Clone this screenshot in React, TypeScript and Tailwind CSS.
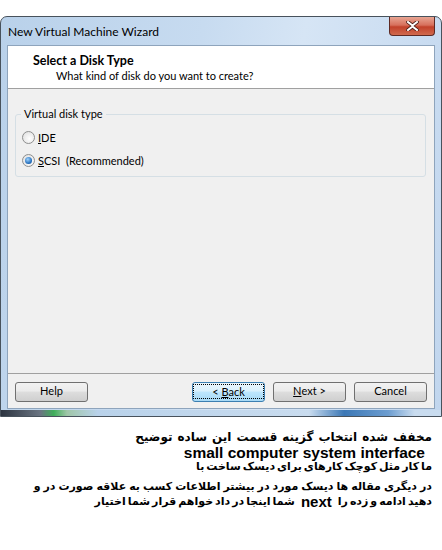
import React from 'react';

const ui = { fontFamily: 'Lato, "Noto Sans", sans-serif' };
const fa = { fontFamily: '"DejaVu Sans", sans-serif' };
const latin = { fontFamily: '"Liberation Sans", Arial, sans-serif' };

function Radio({ checked }: { checked?: boolean }) {
  return (
    <span className="relative inline-flex h-[13px] w-[13px] items-center justify-center rounded-full border border-[#8e8f8f] bg-[radial-gradient(circle_at_60%_60%,#ffffff,#dcdcdc)]">
      {checked && (
        <span className="h-[7px] w-[7px] rounded-full bg-[radial-gradient(circle_at_40%_35%,#9fd4ff,#1a65b5_70%,#0d3f7a)]" />
      )}
    </span>
  );
}

function WinButton({ children, focused }: { children: React.ReactNode; focused?: boolean }) {
  return (
    <button
      className={`flex h-[20px] w-[73px] items-center justify-center rounded-[3px] border text-[11px] text-black ${
        focused
          ? 'border-[#3c7fb1] bg-[linear-gradient(#eaf6fd_0%,#d9f0fc_45%,#bee6fd_50%,#a7d9f5_100%)]'
          : 'border-[#707070] bg-[linear-gradient(#f2f2f2_0%,#ebebeb_45%,#dddddd_50%,#cfcfcf_100%)]'
      }`}
    >
      {focused ? (
        <span className="border border-dotted border-black px-[18px] leading-[13px]">{children}</span>
      ) : (
        children
      )}
    </button>
  );
}

function Words({ words, className }: { words: string[]; className: string }) {
  return (
    <div className={`flex justify-end whitespace-nowrap ${className}`} style={fa}>
      {words.map((w, i) => (
        <span key={i}>{w}</span>
      ))}
    </div>
  );
}

export default function App() {
  return (
    <div className="h-[550px] w-[442px] bg-white" style={ui}>
      <div className="h-[16px]" />
      {/* Window frame */}
      <div className="flex h-[401px] w-[442px] flex-col rounded-t-[7px] border border-[#48525c] bg-[linear-gradient(100deg,#b9d1ea_0%,#c7dbf0_40%,#d6e5f5_60%,#c1d6ee_100%)]">
        {/* Title bar */}
        <div className="relative flex h-[28px] items-center pl-[7px] pt-[2px]">
          <span className="text-[12px] text-black">New Virtual Machine Wizard</span>
          <div className="absolute right-[6px] top-0 flex h-[19px] w-[46px] items-center justify-center rounded-b-[4px] border border-t-0 border-[#5e2a24] bg-[linear-gradient(#e8a593_0%,#d7705c_45%,#c2412a_55%,#d06a4e_100%)]">
            <svg width="13" height="10" viewBox="0 0 13 10">
              <path
                d="M2 1 L6.5 4.5 L11 1 M2 9 L6.5 5.5 L11 9"
                stroke="#4a1c16"
                strokeWidth="3.6"
                fill="none"
                strokeLinecap="square"
              />
              <path
                d="M2 1 L6.5 4.5 L11 1 M2 9 L6.5 5.5 L11 9"
                stroke="#ffffff"
                strokeWidth="2"
                fill="none"
                strokeLinecap="square"
              />
            </svg>
          </div>
        </div>

        {/* Client area */}
        <div className="mx-[6px] flex h-[364px] flex-col border border-[#8ea4bc] bg-[#f0f0f0]">
          <div className="flex h-[43px] flex-col border-b border-[#a0a0a0] bg-white pl-[25px] pt-[7px] leading-[15px] text-black">
            <span className="text-[12.5px] font-bold">Select a Disk Type</span>
            <span className="pl-[23px] text-[11px]">What kind of disk do you want to create?</span>
          </div>

          <div className="flex-1 px-[7px] pr-[8px] pt-[25px]">
            <div className="relative h-[63px] rounded-[3px] border border-[#d5dfe5]">
              <span className="absolute -top-[9px] left-[5px] bg-[#f0f0f0] px-[3px] text-[11px] leading-[15px] text-black">
                Virtual disk type
              </span>
              <div className="flex flex-col gap-[10px] pl-[6px] pt-[16px] text-[11px] leading-[13px] text-black">
                <label className="flex items-center gap-[3px]">
                  <Radio />
                  <span>
                    <span className="underline">I</span>DE
                  </span>
                </label>
                <label className="flex items-center gap-[3px]">
                  <Radio checked />
                  <span className="whitespace-pre">
                    <span className="underline">S</span>CSI  (Recommended)
                  </span>
                </label>
              </div>
            </div>
          </div>

          <div className="flex h-[35px] items-center border-t border-[#a0a0a0] px-[7px] pt-[1px]">
            <WinButton>Help</WinButton>
            <div className="flex-1" />
            <div className="flex gap-[8px]">
              <WinButton focused>
                &lt; <span className="underline">B</span>ack
              </WinButton>
              <WinButton>
                <span className="underline">N</span>ext &gt;
              </WinButton>
              <WinButton>Cancel</WinButton>
            </div>
          </div>
        </div>

        {/* Bottom frame */}
        <div className="mt-auto h-[6px] bg-[linear-gradient(to_right,#2c3440_0%,#6b7582_9%,#3fae5a_12%,#9fc6a8_15%,#b9d2ea_22%,#c9dcef_70%,#3c78b6_78%,#6c9dd0_88%,#c9dcef_94%)]" />
      </div>

      {/* Persian note */}
      <div className="mt-[13px] pr-[10px] font-bold text-black">
        <Words
          className="h-[15px] gap-[5px] text-[12px] leading-[15px]"
          words={['توضیح', 'ساده', 'این', 'قسمت', 'گزینه', 'انتخاب', 'شده', 'مخفف']}
        />
        <div className="h-[15px] pr-[7px] text-right text-[15.5px] leading-[15px]" style={latin}>
          small computer system interface
        </div>
        <Words
          className="h-[13px] gap-[2px] text-[11px] leading-[13px]"
          words={['با', 'ساخت', 'دیسک', 'برای', 'کارهای', 'کوچک', 'مثل', 'کار', 'ما']}
        />
        <Words
          className="mt-[7px] h-[14px] gap-[3px] text-[11px] leading-[14px]"
          words={['و', 'در', 'صورت', 'علاقه', 'به', 'کسب', 'اطلاعات', 'بیشتر', 'در', 'مورد', 'دیسک', 'ها', 'مقاله', 'دیگری', 'در']}
        />
        <div className="flex h-[16px] items-center justify-end gap-[6px] whitespace-nowrap leading-[16px]">
          <Words
            className="gap-[2px] text-[11px]"
            words={['اختیار', 'شما', 'قرار', 'خواهم', 'داد', 'در', 'اینجا', 'شما']}
          />
          <span className="text-[15px]" style={latin}>
            next
          </span>
          <Words className="gap-[2px] text-[11px]" words={['را', 'زده', 'و', 'ادامه', 'دهید']} />
        </div>
      </div>
    </div>
  );
}
